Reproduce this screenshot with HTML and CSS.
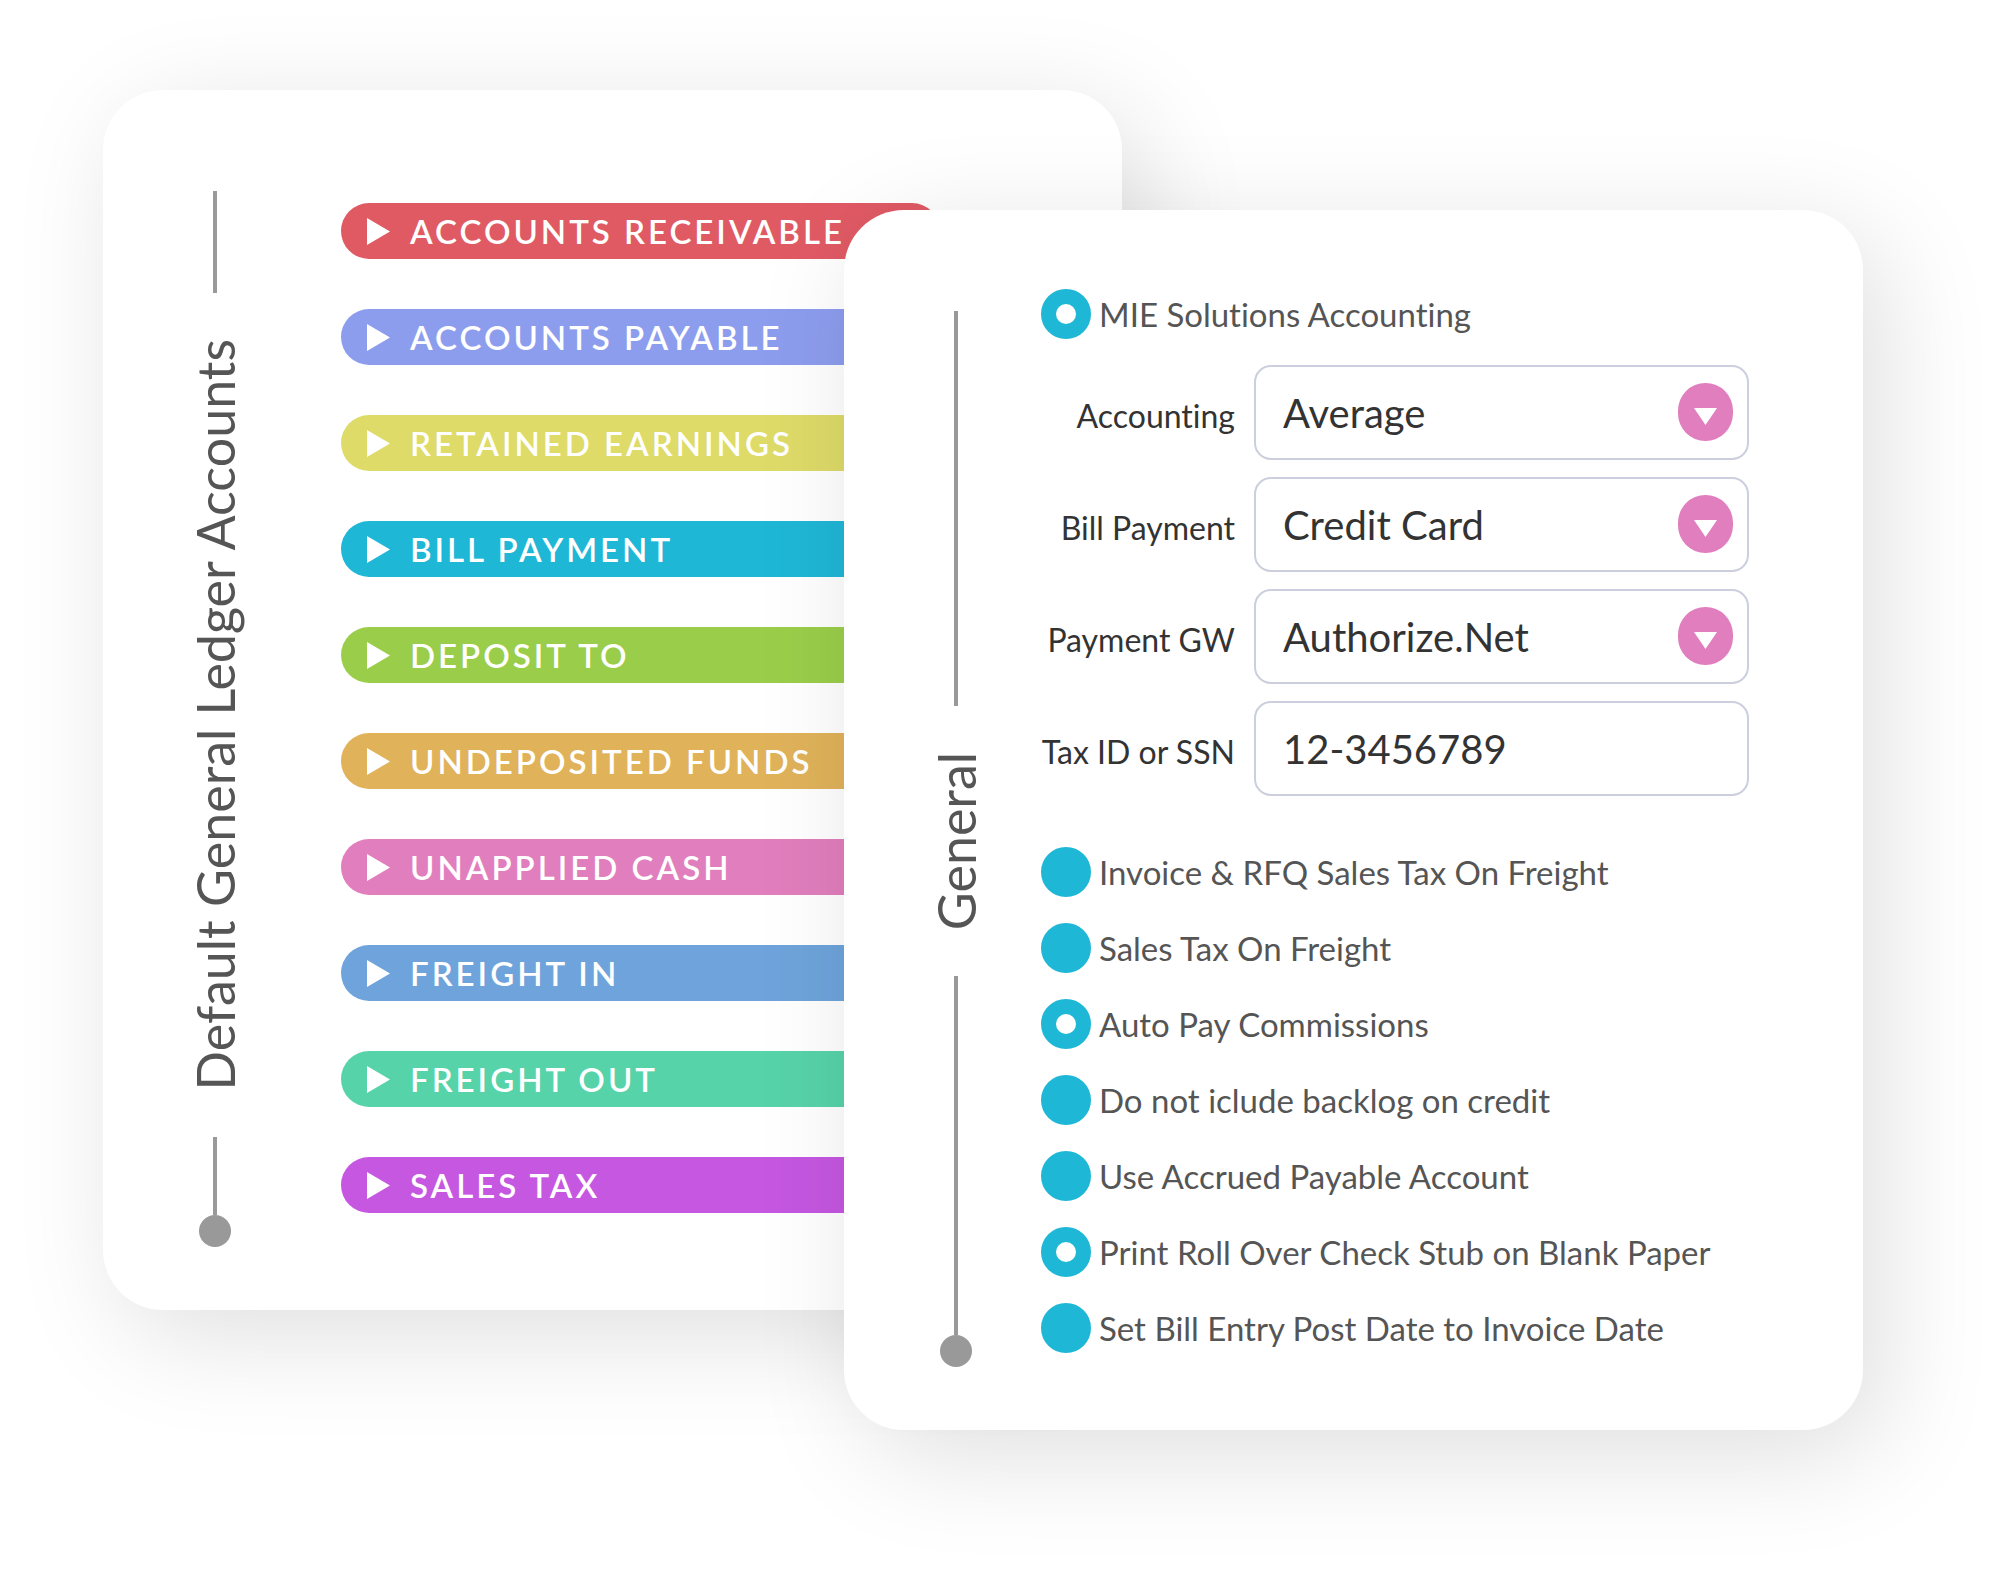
FILE: index.html
```
<!DOCTYPE html>
<html lang="en">

<head>
    <meta charset="utf-8">
    <meta name="viewport" content="width=device-width, initial-scale=1.0">
    <title>Accounting settings</title>

    <link rel="stylesheet" href="styles.css">
</head>

<body>

    <!-- arrows used by the ledger buttons and the drop-downs -->
    <svg class="sprite" aria-hidden="true">
        <symbol id="play" viewBox="0 0 23 27">
            <path d="M0 0 L23 13.5 L0 27 Z" />
        </symbol>
        <symbol id="down" viewBox="0 0 55 58">
            <rect class="knob" width="55" height="58" rx="27.5" />
            <path d="M16 25 H39 L27.5 42 Z" />
        </symbol>
    </svg>

    <main class="cards">
        <section class="card ledger">
            <div class="rail">
                <span class="line line-top"></span>
                <h2>Default General Ledger Accounts</h2>
                <span class="line line-bottom"></span>
                <span class="dot"></span>
            </div>
            <div class="accounts">
                <button class="account red"><svg><use href="#play" /></svg>ACCOUNTS RECEIVABLE</button>
                <button class="account periwinkle"><svg><use href="#play" /></svg>ACCOUNTS PAYABLE</button>
                <button class="account yellow"><svg><use href="#play" /></svg>RETAINED EARNINGS</button>
                <button class="account cyan"><svg><use href="#play" /></svg>BILL PAYMENT</button>
                <button class="account green"><svg><use href="#play" /></svg>DEPOSIT TO</button>
                <button class="account orange"><svg><use href="#play" /></svg>UNDEPOSITED FUNDS</button>
                <button class="account pink"><svg><use href="#play" /></svg>UNAPPLIED CASH</button>
                <button class="account blue"><svg><use href="#play" /></svg>FREIGHT IN</button>
                <button class="account mint"><svg><use href="#play" /></svg>FREIGHT OUT</button>
                <button class="account purple"><svg><use href="#play" /></svg>SALES TAX</button>
            </div>
        </section>

        <section class="card general">
            <div class="rail">
                <span class="line line-top"></span>
                <h2>General</h2>
                <span class="line line-bottom"></span>
                <span class="dot"></span>
            </div>
            <form class="settings">
                <label class="option"><input type="checkbox" checked>MIE Solutions Accounting</label>

                <div class="fields">
                    <div class="field">
                        <label for="accounting">Accounting</label>
                        <div class="control">
                            <select id="accounting">
                                <option>Average</option>
                            </select>
                            <svg class="arrow"><use href="#down" /></svg>
                        </div>
                    </div>
                    <div class="field">
                        <label for="bill">Bill Payment</label>
                        <div class="control">
                            <select id="bill">
                                <option>Credit Card</option>
                            </select>
                            <svg class="arrow"><use href="#down" /></svg>
                        </div>
                    </div>
                    <div class="field">
                        <label for="gateway">Payment GW</label>
                        <div class="control">
                            <select id="gateway">
                                <option>Authorize.Net</option>
                            </select>
                            <svg class="arrow"><use href="#down" /></svg>
                        </div>
                    </div>
                    <div class="field">
                        <label for="tax">Tax ID or SSN</label>
                        <div class="control">
                            <input id="tax" type="text" value="12-3456789">
                        </div>
                    </div>
                </div>

                <div class="options">
                    <label class="option"><input type="checkbox">Invoice &amp; RFQ Sales Tax On Freight</label>
                    <label class="option"><input type="checkbox">Sales Tax On Freight</label>
                    <label class="option"><input type="checkbox" checked>Auto Pay Commissions</label>
                    <label class="option"><input type="checkbox">Do not iclude backlog on credit</label>
                    <label class="option"><input type="checkbox">Use Accrued Payable Account</label>
                    <label class="option"><input type="checkbox" checked>Print Roll Over Check Stub on Blank Paper</label>
                    <label class="option"><input type="checkbox">Set Bill Entry Post Date to Invoice Date</label>
                </div>
            </form>
        </section>
    </main>

</body>

</html>
```
FILE: styles.css
```
* {
    box-sizing: border-box;
}

body {
    margin: 0;
    background-color: #fff;
    color: #555;
    font-family: Lato, "Open Sans", sans-serif;
    font-variant-ligatures: none;
}

.sprite {
    display: none;
}

/* two cards sharing the middle column, the second one lower and on top */
.cards {
    display: grid;
    grid-template-columns: 741fr 278fr 741fr;
    padding: 90px 137px 149px 103px;
}

.card {
    display: flex;
    grid-row: 1;
    padding: 79px 114px 63px 96px;
    border-radius: 60px;
    background-color: #fff;
    box-shadow: 20px 25px 110px rgba(0, 0, 0, 0.13);
}

.ledger {
    grid-column: 1 / 3;
    gap: 110px;
    margin-bottom: 120px;
    padding-right: 182px;
}

.general {
    grid-column: 2 / 4;
    gap: 69px;
    margin-top: 120px;
    z-index: 1;
}

/* vertical title with lines */
.rail {
    display: flex;
    flex-direction: column;
    align-items: center;
    width: 32px;
    margin-top: 22px;
}

.line {
    width: 4px;
    background-color: #999;
}

.line-top {
    flex: 13;
}

.line-bottom {
    flex: 10;
}

.general .line-top {
    flex: 11;
}

.dot {
    width: 32px;
    height: 32px;
    border-radius: 50%;
    background-color: #999;
}

h2 {
    margin: 46px 0;
    font-size: 52px;
    font-weight: 400;
    line-height: 60px;
    white-space: nowrap;
    writing-mode: vertical-rl;
    transform: rotate(180deg);
}

/* ledger buttons */
.accounts {
    display: flex;
    flex: 1;
    flex-direction: column;
    gap: 50px;
    padding-top: 34px;
}

.account {
    display: flex;
    align-items: center;
    gap: 20px;
    height: 56px;
    padding: 0 26px;
    border: 0;
    border-radius: 28px;
    color: #fff;
    font-family: inherit;
    font-size: 33px;
    font-weight: 600;
    letter-spacing: 3px;
    white-space: nowrap;
    cursor: pointer;
}

.account svg {
    width: 23px;
    height: 27px;
    fill: #fff;
}

.red {
    background-color: #e05a64;
}

.periwinkle {
    background-color: #8d9dee;
}

.yellow {
    background-color: #dedb69;
}

.cyan {
    background-color: #1fb7d6;
}

.green {
    background-color: #9ace4a;
}

.orange {
    background-color: #e0b25a;
}

.pink {
    background-color: #e17ebd;
}

.blue {
    background-color: #6ea4db;
}

.mint {
    background-color: #57d3a9;
}

.purple {
    background-color: #c557e1;
}

/* settings form */
.settings {
    flex: 1;
    padding-bottom: 14px;
}

.option {
    display: flex;
    align-items: center;
    gap: 8px;
    height: 50px;
    font-size: 33px;
    line-height: 38px;
    white-space: nowrap;
}

.option input {
    appearance: none;
    width: 50px;
    height: 50px;
    margin: 0;
    border: 15px solid #1fb7d6;
    border-radius: 50%;
    background-color: #1fb7d6;
}

.option input:checked {
    background-color: #fff;
}

.options {
    display: flex;
    flex-direction: column;
    gap: 26px;
}

.fields {
    display: flex;
    flex-direction: column;
    gap: 17px;
    margin: 26px 0 51px;
}

.field {
    display: flex;
    align-items: baseline;
    gap: 19px;
    color: #333;
}

.field label {
    width: 194px;
    font-size: 32px;
    text-align: right;
    white-space: nowrap;
}

.control {
    position: relative;
    flex: 1;
}

.control select,
.control input {
    appearance: none;
    display: block;
    width: 100%;
    height: 95px;
    padding: 0 80px 0 27px;
    border: 2px solid #cbcfde;
    border-radius: 17px;
    background-color: #fff;
    color: #333;
    font-family: inherit;
    font-size: 40px;
}

.arrow {
    position: absolute;
    top: 18px;
    right: 16px;
    width: 55px;
    height: 58px;
    fill: #fff;
    pointer-events: none;
}

.knob {
    fill: #e17ebd;
}
```
